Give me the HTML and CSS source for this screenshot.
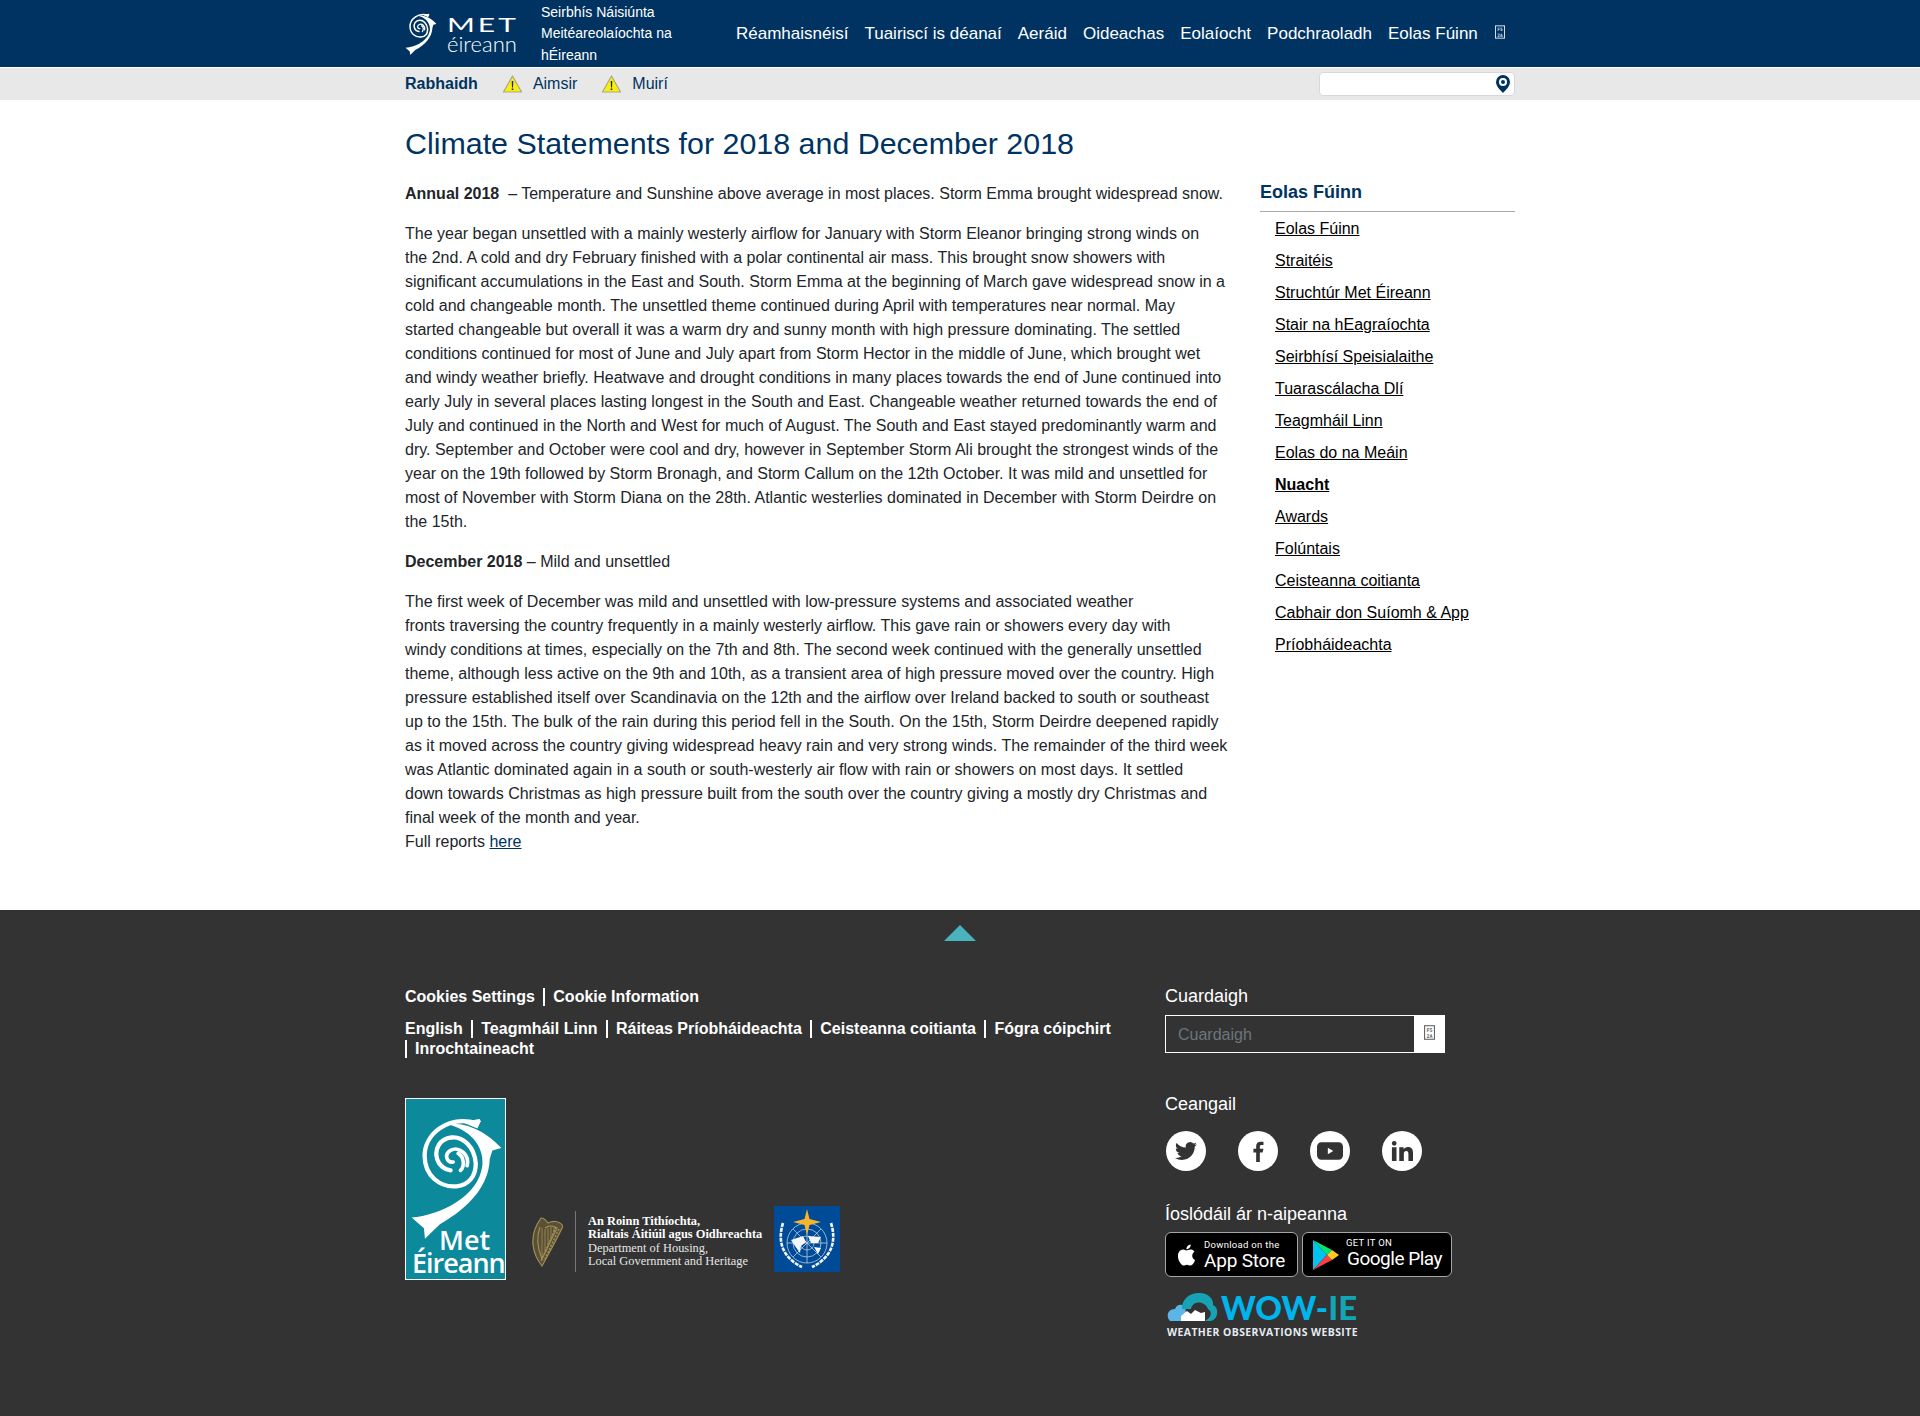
FILE: index.html
```html
<!DOCTYPE html>
<html lang="ga">
<head>
<meta charset="utf-8">
<title>Climate Statements for 2018 and December 2018</title>
<link rel="stylesheet" href="styles.css">
</head>
<body>
<svg class="defs" width="0" height="0" aria-hidden="true">
  <symbol id="swirl" viewBox="60 100 280 375">
    <path fill="currentColor" d="M172 127C235 118 298 158 335 199L308 206L300 232C298 310 240 378 150 428L105 472L102 440L65 408C150 402 268 345 278 250C284 190 235 140 172 127Z"/>
    <path fill="none" stroke="currentColor" stroke-width="13" stroke-linecap="round" d="M262 124C170 98 104 160 104 222C104 282 150 318 200 314C240 310 258 280 258 245C254 195 220 164 185 167C150 172 132 200 142 233C148 252 165 264 182 266"/>
    <path fill="currentColor" d="M270 111L273 118L263 140L225 124C240 116 255 113 270 111Z"/>
    <path fill="none" stroke="currentColor" stroke-width="11" stroke-linecap="round" d="M232 252C240 218 208 192 182 206C162 218 170 243 190 241M205 215C222 225 226 252 212 266"/>
  </symbol>
  <symbol id="warn" viewBox="0 0 20 18">
    <path d="M10 1L19 17H1Z" fill="#f8ee12" stroke="#a9a88a" stroke-width="1.200" stroke-linejoin="round"/>
    <path d="M9.200 6h1.600l-.3 6.500h-1ZM9.200 13.500h1.600v1.600H9.200Z" fill="#222"/>
  </symbol>
</svg>

<header class="topbar">
  <div class="container topbar-inner">
    <a class="brand" href="#">
      <svg class="brand-swirl"><use href="#swirl"/></svg>
      <span class="brand-words"><span class="brand-met">MET</span><span class="brand-eir">éireann</span></span>
    </a>
    <div class="tagline">Seirbhís Náisiúnta Meitéareolaíochta na hÉireann</div>
    <nav class="mainnav">
      <a href="#">Réamhaisnéisí</a>
      <a href="#">Tuairiscí is déanaí</a>
      <a href="#">Aeráid</a>
      <a href="#">Oideachas</a>
      <a href="#">Eolaíocht</a>
      <a href="#">Podchraoladh</a>
      <a href="#">Eolas Fúinn</a>
      <svg class="tofu tofu-nav" viewBox="0 0 12 16"><rect x=".6" y=".6" width="10.800" height="14.800" fill="none" stroke="currentColor" stroke-width="1.200"/><text x="6" y="7" class="tofu-text">F5</text><text x="6" y="14" class="tofu-text">2A</text></svg>
    </nav>
  </div>
</header>

<div class="warnbar">
  <div class="container warnbar-inner">
    <strong class="warn-title">Rabhaidh</strong>
    <a class="warn-link" href="#"><svg class="warn-icon"><use href="#warn"/></svg>Aimsir</a>
    <a class="warn-link" href="#"><svg class="warn-icon"><use href="#warn"/></svg>Muirí</a>
    <div class="locbox">
      <svg class="pin" viewBox="0 0 14 18"><path fill="#003361" fill-rule="evenodd" d="M7 0a7 7 0 0 1 7 7c0 4-4 8-7 11C4 15 0 11 0 7a7 7 0 0 1 7-7Zm0 3a4 4 0 1 0 0 8a4 4 0 0 0 0-8Z"/><circle cx="7" cy="7" r="2" fill="#003361"/></svg>
    </div>
  </div>
</div>

<main class="container content">
  <h1 class="page-title">Climate Statements for 2018 and December 2018</h1>
  <div class="content-row">
    <article class="article">
      <p><strong>Annual 2018</strong>&nbsp; – Temperature and Sunshine above average in most places. Storm Emma brought widespread snow.</p>
      <p>The year began unsettled with a mainly westerly airflow for January with Storm Eleanor bringing strong winds on the&nbsp;2nd. A cold and dry February finished with a polar continental air mass. This brought snow showers with significant accumulations in the East and South. Storm Emma at the beginning of March gave widespread snow in a cold and changeable month. The unsettled theme continued during April with temperatures near normal. May started&nbsp;changeable but overall it was a warm dry and sunny month with high pressure dominating. The settled conditions continued for most of June and July apart from Storm Hector in the middle of June, which brought wet and windy weather briefly. Heatwave and drought conditions in many places towards the end of June continued into early July in several places lasting longest in the South and East. Changeable weather returned towards the end of July and continued in the North and West for much of August. The South and East stayed predominantly warm and dry. September and October were cool and dry, however in September Storm Ali brought the strongest winds of the year on the 19th followed by Storm Bronagh, and Storm Callum on the 12th October. It was mild and unsettled for most of November with Storm Diana on the 28th. Atlantic westerlies dominated in December with Storm Deirdre on the&nbsp;15th.</p>
      <p><strong>December 2018</strong> – Mild and unsettled</p>
      <p>The first week of December was mild and unsettled with low-pressure systems and associated weather fronts&nbsp;traversing the country frequently in a mainly westerly airflow. This gave rain or showers every day with windy&nbsp;conditions at times, especially on the 7th and 8th. The second week continued with the generally unsettled theme, although less active on the 9th and 10th, as a transient area of high pressure moved over the country. High pressure established itself over Scandinavia on the 12th and the airflow over Ireland backed to south or southeast up to the 15th. The bulk of the rain during this period fell in the South. On the 15th, Storm Deirdre deepened rapidly as it moved across the country giving widespread heavy rain and very strong winds. The remainder of the third week was Atlantic dominated again in a south or south-westerly air flow with rain or showers on most days. It settled down&nbsp;towards Christmas as high pressure built from the south over the country giving a mostly dry Christmas and final&nbsp;week of the month and year.<br>Full reports <a class="inline-link" href="#">here</a></p>
    </article>
    <aside class="sidebar">
      <h2 class="side-title">Eolas Fúinn</h2>
      <ul class="side-list">
        <li><a href="#">Eolas Fúinn</a></li>
        <li><a href="#">Straitéis</a></li>
        <li><a href="#">Struchtúr Met Éireann</a></li>
        <li><a href="#">Stair na hEagraíochta</a></li>
        <li><a href="#">Seirbhísí Speisialaithe</a></li>
        <li><a href="#">Tuarascálacha Dlí</a></li>
        <li><a href="#">Teagmháil Linn</a></li>
        <li><a href="#">Eolas do na Meáin</a></li>
        <li><a class="is-current" href="#">Nuacht</a></li>
        <li><a href="#">Awards</a></li>
        <li><a href="#">Folúntais</a></li>
        <li><a href="#">Ceisteanna coitianta</a></li>
        <li><a href="#">Cabhair don Suíomh &amp; App</a></li>
        <li><a href="#">Príobháideachta</a></li>
      </ul>
    </aside>
  </div>
</main>

<footer class="footer">
  <div class="totop"><a class="totop-arrow" href="#" aria-label="Top"></a></div>
  <div class="container footer-row">
    <div class="footer-left">
      <div class="flinks flinks-cookies">
        <a href="#">Cookies Settings</a><a class="sep" href="#">Cookie Information</a>
      </div>
      <div class="flinks">
        <a href="#">English</a><a class="sep" href="#">Teagmháil Linn</a><a class="sep" href="#">Ráiteas Príobháideachta</a><a class="sep" href="#">Ceisteanna coitianta</a><a class="sep" href="#">Fógra cóipchirt</a><a class="sep" href="#">Inrochtaineacht</a>
      </div>
      <div class="partners">
        <div class="met-logo">
          <svg class="met-swirl"><use href="#swirl"/></svg>
          <span class="met-word met-word-a">Met</span>
          <span class="met-word met-word-b">Éireann</span>
        </div>
        <div class="gov-logo">
          <svg class="harp" viewBox="0 0 31 50">
            <path fill="#5a5036" d="M9 1C4 8 0 18 1 28C2 37 6 44 10 49C16 38 24 24 31 9C27 3 20 4 16 6C14 3 12 1 9 1Z"/>
            <g fill="none" stroke="#a08d58" stroke-width="1.200">
              <path d="M9 1C4 8 0 18 1 28C2 37 6 44 10 49C16 38 24 24 31 9C27 3 20 4 16 6C14 3 12 1 9 1Z"/>
              <path d="M8 10C5 18 5 30 10 42L25 11C21 8 16 9 13 11"/>
              <path d="M10 11V40M13 12V35M16 11V29M19 10V23M22 10V17" stroke-width=".8"/>
              <path d="M27 12L12 44M24 10L9 44" stroke-width="1.500" stroke-dasharray="2 1.500"/>
            </g>
          </svg>
          <div class="gov-text">
            <strong>An Roinn Tithíochta,</strong>
            <strong>Rialtais Áitiúil agus Oidhreachta</strong>
            <span>Department of Housing,</span>
            <span>Local Government and Heritage</span>
          </div>
        </div>
        <svg class="wmo" viewBox="0 0 66 66">
          <rect width="66" height="66" fill="#004b97"/>
          <g fill="none" stroke="#b9cce2" stroke-width=".8">
            <circle cx="33" cy="37" r="20"/><circle cx="33" cy="37" r="14"/><circle cx="33" cy="37" r="7"/>
            <path d="M13 37H53M33 17V57M19 23L47 51M47 23L19 51"/>
          </g>
          <path fill="#f4f7fb" d="M17 34L29 30L32 36L27 40L26 47L21 40ZM34 30L47 31L44 37L37 37ZM40 41L47 42L44 48Z"/>
          <g fill="none" stroke="#f4f7fb" stroke-width="2.600" stroke-dasharray="4 1">
            <path d="M9 17C3 36 9 52 28 61"/><path d="M57 17C63 36 57 52 38 61"/>
          </g>
          <path fill="#f7b52c" d="M33 3L35.500 13L47 16L35.500 19L33 29L30.500 19L19 16L30.500 13Z"/>
        </svg>
      </div>
    </div>
    <div class="footer-right">
      <h3 class="fhead fhead-search">Cuardaigh</h3>
      <div class="fsearch">
        <span class="fsearch-input">Cuardaigh</span>
        <span class="fsearch-btn"><svg class="tofu tofu-btn" viewBox="0 0 12 16"><rect x=".6" y=".6" width="10.800" height="14.800" fill="none" stroke="currentColor" stroke-width="1.200"/><text x="6" y="7" class="tofu-text">F5</text><text x="6" y="14" class="tofu-text">2A</text></svg></span>
      </div>
      <h3 class="fhead fhead-social">Ceangail</h3>
      <div class="social">
        <a class="social-dot" href="#" aria-label="Twitter"><svg viewBox="0 0 24 24"><path d="M23.953 4.570a10 10 0 01-2.825.775 4.958 4.958 0 002.163-2.723c-.951.555-2.005.959-3.127 1.184a4.920 4.920 0 00-8.384 4.482C7.690 8.095 4.067 6.130 1.640 3.162a4.822 4.822 0 00-.666 2.475c0 1.710.870 3.213 2.188 4.096a4.904 4.904 0 01-2.228-.616v.060a4.923 4.923 0 003.946 4.827 4.996 4.996 0 01-2.212.085 4.936 4.936 0 004.604 3.417 9.867 9.867 0 01-6.102 2.105c-.390 0-.779-.023-1.170-.067a13.995 13.995 0 007.557 2.209c9.053 0 13.998-7.496 13.998-13.985 0-.210 0-.420-.015-.630A9.935 9.935 0 0024 4.590z"/></svg></a>
        <a class="social-dot" href="#" aria-label="Facebook"><svg viewBox="0 0 24 24"><path d="M14 13.500h3l1-4h-4v-2c0-1.030 0-2 2-2h2V2.140c-.326-.043-1.557-.140-2.857-.140C11.928 2 10 3.657 10 6.700v2.800H7v4h3V24h4V13.500z"/></svg></a>
        <a class="social-dot social-yt" href="#" aria-label="YouTube"><svg viewBox="0 0 24 24"><path fill-rule="evenodd" d="M4 4h16a4 4 0 0 1 4 4v8a4 4 0 0 1-4 4H4a4 4 0 0 1-4-4V8a4 4 0 0 1 4-4Zm6 5v6l5-3Z"/></svg></a>
        <a class="social-dot" href="#" aria-label="LinkedIn"><svg viewBox="0 0 24 24"><path d="M1 8h5v15H1zM3.500 1a2.600 2.600 0 1 1 0 5.200a2.600 2.600 0 0 1 0-5.200zM9 8h4.800v2.100C14.700 8.600 16.400 7.600 18.500 7.600 22.500 7.600 24 10 24 14.200V23h-5v-7.800c0-2-.6-3.300-2.300-3.300-1.900 0-2.700 1.400-2.700 3.300V23H9z"/></svg></a>
      </div>
      <h3 class="fhead fhead-apps">Íoslódáil ár n-aipeanna</h3>
      <div class="stores">
        <a class="store store-apple" href="#">
          <svg class="store-icon" viewBox="0 0 24 24"><path fill="#fff" d="M12.152 6.896c-.948 0-2.415-1.078-3.960-1.040-2.040.027-3.910 1.183-4.961 3.014-2.117 3.675-.546 9.103 1.519 12.090 1.013 1.454 2.208 3.090 3.792 3.039 1.520-.065 2.090-.987 3.935-.987 1.831 0 2.350.987 3.960.948 1.637-.026 2.676-1.480 3.676-2.948 1.156-1.688 1.636-3.325 1.662-3.415-.039-.013-3.182-1.221-3.220-4.857-.026-3.040 2.480-4.494 2.597-4.559-1.429-2.090-3.623-2.324-4.390-2.376-2-.156-3.675 1.090-4.610 1.090zM15.530 3.830c.843-1.012 1.400-2.427 1.245-3.830-1.207.052-2.662.805-3.532 1.818-.780.896-1.454 2.338-1.273 3.714 1.338.104 2.715-.688 3.559-1.701"/></svg>
          <span class="store-text"><small class="store-small">Download on the</small><b class="store-big">App Store</b></span>
        </a>
        <a class="store store-google" href="#">
          <svg class="store-icon-g" viewBox="0 0 26 30">
            <path fill="#00c4f0" d="M0 0L14 15L0 30Z"/>
            <path fill="#00e676" d="M0 0L19 10L14 15Z"/>
            <path fill="#ff3d4a" d="M0 30L19 20L14 15Z"/>
            <path fill="#ffca28" d="M19 10L26 15L19 20L14 15Z"/>
          </svg>
          <span class="store-text"><small class="store-small store-small-g">GET IT ON</small><b class="store-big store-big-g">Google Play</b></span>
        </a>
      </div>
      <a class="wow" href="#">
        <span class="wow-top">
          <svg class="wow-cloud" viewBox="0 0 52 30">
            <path fill="#5bb5e6" d="M3 29C-1 25 0 17 8 17C10 12 14 12 18 14L20 29Z"/>
            <path fill="#18a3b5" d="M15 17C14 7 24 0 33 1C42 1 47 8 46 13C52 15 52 27 44 29H38C44 26 46 20 41 17C38 9 26 8 24 17Z"/>
            <path fill="#fff" d="M14 29V24L20 19L24 22L28 18L34 21L38 20V29Z"/>
          </svg>
          <span class="wow-word">WOW-<span class="wow-ie">IE</span></span>
        </span>
        <span class="wow-sub">WEATHER OBSERVATIONS WEBSITE</span>
      </a>
    </div>
  </div>
</footer>
</body>
</html>
```
FILE: styles.css
```css
* { box-sizing: border-box; }
html, body { margin: 0; padding: 0; }
body {
  font-family: "Liberation Sans", Arial, sans-serif;
  font-size: 16px;
  line-height: 24px;
  color: #212529;
  background: #fff;
  min-height: 1416px;
}
a { color: inherit; text-decoration: none; }
.defs { position: absolute; }
.tofu-text { font-family: "DejaVu Sans Mono", monospace; font-weight: 700; font-size: 5.500px; text-anchor: middle; fill: currentColor; }
.container { width: 1110px; margin: 0 auto; }

.topbar { background: #003361; height: 67px; color: #fff; }
.topbar-inner { display: flex; align-items: center; height: 67px; }
.brand { display: flex; align-items: center; width: 136px; flex: none; }
.brand-swirl { width: 32px; height: 44px; color: #fff; flex: none; margin-top: 1px; }
.brand-words { display: flex; flex-direction: column; margin-left: 10px; font-family: "Lato", sans-serif; color: #fff; }
.brand-met { font-size: 20px; line-height: 19px; letter-spacing: 2px; font-weight: 400; transform: scaleX(1.500); transform-origin: left center; }
.brand-eir { font-size: 22px; line-height: 19px; font-weight: 300; }
.tagline { width: 155px; flex: none; font-size: 14px; line-height: 21.500px; color: #fff; padding-top: 1px; }
.mainnav { display: flex; align-items: center; gap: 16px; margin-left: 40px; font-size: 17px; color: #fff; white-space: nowrap; }
.tofu { color: #d7dde6; display: block; }
.tofu-nav { width: 10px; height: 14px; margin-top: -3px; margin-left: 1px; }

.warnbar { background: #e8e8e8; height: 33px; border-top: 1px solid #fff; }
.warnbar-inner { display: flex; align-items: center; height: 32px; color: #003361; }
.warn-title { margin-right: 24px; }
.warn-link { display: flex; align-items: center; margin-right: 24px; }
.warn-icon { width: 21px; height: 18px; margin-right: 10px; }
.locbox { margin-left: auto; width: 196px; height: 24px; background: #fff; border: 1px solid #d5d8de; border-radius: 4px; display: flex; align-items: center; justify-content: flex-end; padding-right: 4px; }
.pin { width: 14px; height: 18px; }

.content { padding-top: 25px; height: 810px; }
.page-title { margin: 0 0 21px; font-size: 30.400px; line-height: 36px; font-weight: 400; color: #003361; }
.content-row { display: flex; }
.article { width: 825px; flex: none; }
.article p { margin: 0 0 16px; }
.inline-link { color: #003361; text-decoration: underline; }
.sidebar { width: 255px; margin-left: 30px; margin-top: -4px; flex: none; }
.side-title { margin: 0; padding-bottom: 5px; font-size: 18px; line-height: 28px; font-weight: 700; color: #003361; border-bottom: 1px solid #aaa; }
.side-list { list-style: none; margin: 0; padding: 5px 0 0 15px; }
.side-list li { height: 32px; line-height: 24px; }
.side-list a { color: #000; text-decoration: underline; }
.side-list a.is-current { font-weight: 700; }

.footer { background: #333; height: 506px; color: #fff; }
.totop { height: 50px; padding-top: 15px; display: flex; justify-content: center; }
.totop-arrow { width: 0; height: 0; border-left: 16px solid transparent; border-right: 16px solid transparent; border-bottom: 16px solid #4ab4be; }
.footer-row { display: flex; }
.footer-left { width: 760px; flex: none; padding-top: 27px; }
.footer-right { padding-top: 24px; flex: none; width: 350px; }
.flinks { font-weight: 700; font-size: 16px; line-height: 20px; width: 730px; }
.flinks-cookies { margin-bottom: 12px; }
.flinks a { color: #fff; display: inline-block; margin-right: 8.500px; }
.flinks .sep { border-left: 2px solid #fff; padding-left: 8px; line-height: 18px; }
.partners { display: flex; align-items: flex-end; margin-top: 39px; }
.met-logo { width: 101px; height: 182px; background: #0c8a9c; border: 1px solid #fff; color: #fff; display: flex; flex-direction: column; align-items: flex-start; font-family: "Open Sans", sans-serif; font-weight: 600; font-size: 27px; line-height: 22px; flex: none; overflow: hidden; }
.met-swirl { width: 93px; height: 125px; margin-top: 16px; margin-left: 4px; color: #fff; flex: none; }
.met-word-a { margin-top: -11px; margin-left: 33px; }
.met-word-b { margin-left: 6px; margin-top: 1px; letter-spacing: -1px; }
.gov-logo { display: flex; align-items: center; margin-left: 26px; margin-bottom: 8px; }
.harp { width: 31px; height: 50px; flex: none; }
.gov-text { margin-left: 12px; padding-left: 12px; border-left: 1px solid #777; height: 61px; display: flex; flex-direction: column; justify-content: center; font-family: "Liberation Serif", serif; font-size: 12.400px; line-height: 13.400px; color: #e6e6e6; white-space: nowrap; }
.gov-text strong { color: #fff; }
.wmo { width: 66px; height: 66px; margin-left: 12px; margin-bottom: 8px; flex: none; }

.fhead { margin: 0; font-size: 18px; line-height: 24px; font-weight: 400; color: #fff; }
.fsearch { display: flex; width: 280px; height: 38px; margin-top: 7px; border: 1px solid #fff; }
.fsearch-input { flex: 1; padding: 7px 12px; color: #6c757d; font-size: 16px; }
.fsearch-btn { width: 30px; background: #fff; display: flex; align-items: center; justify-content: center; }
.tofu-btn { width: 11px; height: 15px; color: #666; margin-top: -3px; }
.fhead-social { margin-top: 39px; }
.social { display: flex; gap: 32px; margin-top: 15px; padding-left: 1px; }
.social-dot { width: 40px; height: 40px; border-radius: 50%; background: #fff; display: flex; align-items: center; justify-content: center; flex: none; }
.social-dot svg { width: 22px; height: 22px; fill: #333; }
.social-dot.social-yt svg { width: 26px; height: 26px; }
.fhead-apps { margin-top: 31px; }
.stores { display: flex; gap: 4px; margin-top: 6px; }
.store { display: flex; align-items: center; height: 45px; background: #000; border: 1px solid #a6a6a6; border-radius: 6px; color: #fff; }
.store-apple { width: 133px; padding-left: 10px; }
.store-google { width: 150px; padding-left: 10px; }
.store-icon { width: 21px; height: 26px; flex: none; }
.store-icon-g { width: 26px; height: 30px; flex: none; }
.store-text { display: flex; flex-direction: column; margin-left: 7px; font-family: "Roboto", sans-serif; white-space: nowrap; }
.store-small { font-size: 9.500px; line-height: 11px; letter-spacing: .3px; }
.store-big { font-size: 19px; line-height: 21px; font-weight: 400; letter-spacing: -.2px; }
.store-small-g { margin-top: -3px; }
.store-big-g { letter-spacing: -.5px; margin-left: 1px; }
.wow { display: flex; flex-direction: column; width: 192px; margin-top: 15px; margin-left: 2px; }
.wow-top { display: flex; align-items: center; height: 30px; white-space: nowrap; }
.wow-cloud { width: 52px; height: 30px; flex: none; }
.wow-word { flex: none; font-family: "Lato", sans-serif; font-weight: 900; font-size: 33px; line-height: 28px; color: #00b4ec; margin-left: 2px; }
.wow-ie { color: #12a5b5; }
.wow-sub { font-family: "Open Sans", sans-serif; font-weight: 700; font-size: 10.400px; line-height: 14px; margin-top: 3px; letter-spacing: .45px; color: #e4ebf2; white-space: nowrap; }
```
